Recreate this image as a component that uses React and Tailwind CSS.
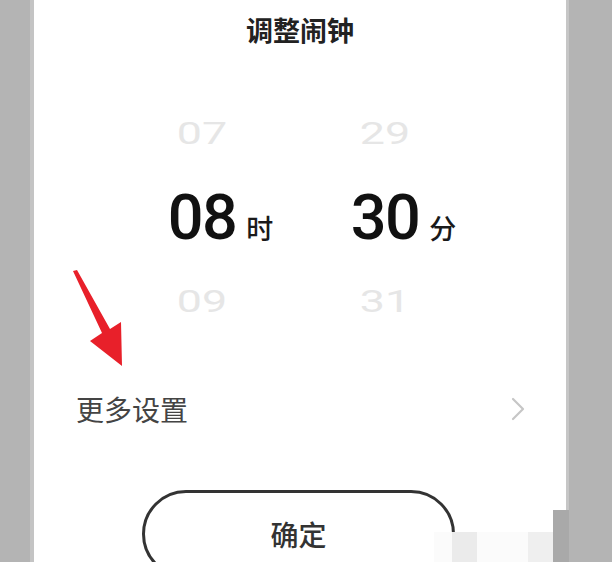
import React from "react";

const cjk = { fontFamily: '"Noto Sans CJK SC", "Noto Sans", sans-serif' };
const num = { fontFamily: 'Roboto, "Noto Sans CJK SC", sans-serif' };

const Faded = ({ children }) => (
  <span className="inline-block scale-x-[1.4] text-[32px] leading-none text-[#e6e6e6]" style={num}>
    {children}
  </span>
);

const Column = ({ prev, value, unit, next }) => (
  <div className="flex w-[120px] flex-col items-center">
    <div className="flex h-[84px] items-center">
      <Faded>{prev}</Faded>
    </div>
    <div className="flex h-[84px] items-center">
      <div className="flex items-baseline">
        <span className="w-[37px]" />
        <span className="text-[63px] leading-none font-medium tracking-tight text-[#111]" style={num}>
          {value}
        </span>
        <span className="ml-[10px] w-[27px] text-[27px] leading-none font-medium text-[#1a1a1a]" style={cjk}>
          {unit}
        </span>
      </div>
    </div>
    <div className="flex h-[84px] items-center">
      <Faded>{next}</Faded>
    </div>
  </div>
);

export default function App() {
  return (
    <div className="relative flex h-[562px] w-[612px] flex-col overflow-hidden bg-[#b4b4b4]">
      <div className="h-[2px] w-full bg-[#4d4d4d]" />
      <div className="flex flex-1">
        <div className="w-[34px] border-r-4 border-[#c4c4c4]" />
        <div className="flex w-[532px] flex-col bg-white">
          {/* title */}
          <div className="flex h-[60px] items-center justify-center">
            <span className="text-[27px] font-bold text-[#222]" style={cjk}>
              调整闹钟
            </span>
          </div>

          {/* picker */}
          <div className="mt-[31px] flex gap-[63px] pl-[108px]">
            <Column prev="07" value="08" unit="时" next="09" />
            <Column prev="29" value="30" unit="分" next="31" />
          </div>

          {/* more settings */}
          <div className="mt-[36px] flex h-[60px] items-center justify-between pl-[42px] pr-[40px]">
            <span className="text-[28px] text-[#444]" style={cjk}>
              更多设置
            </span>
            <svg width="16" height="24" viewBox="0 0 16 24" fill="none">
              <path d="M3 2 L13 12 L3 22" stroke="#c6c6c6" strokeWidth="2.2" strokeLinecap="round" strokeLinejoin="round" />
            </svg>
          </div>

          {/* confirm */}
          <div className="mt-[51px] pl-[108px]">
            <button className="flex h-[88px] w-[313px] items-start justify-center rounded-full border-[3px] border-[#333] pt-[20px]">
              <span className="text-[28px] font-medium text-[#333]" style={cjk}>
                确定
              </span>
            </button>
          </div>
        </div>
        <div className="flex-1 border-l-[3px] border-[#c6c6c6]" />
      </div>

      {/* red arrow annotation */}
      <svg className="absolute left-0 top-0" width="612" height="562" viewBox="0 0 612 562">
        <polygon points="73,271 77,270 110,329 121,322 122,366 90,341 102,333" fill="#e8202a" />
      </svg>

      {/* watermark blocks */}
      <div className="absolute left-[434px] top-[532px] flex h-[30px] w-[119px] bg-[#fbfbfb]">
        <div className="ml-[18px] w-[25px] bg-[#ebebeb]" />
        <div className="ml-[51px] w-[25px] bg-[#efefef]" />
      </div>
      <div className="absolute left-[553px] top-[510px] h-[52px] w-[16px] bg-[#a9a9a9]" />
    </div>
  );
}
